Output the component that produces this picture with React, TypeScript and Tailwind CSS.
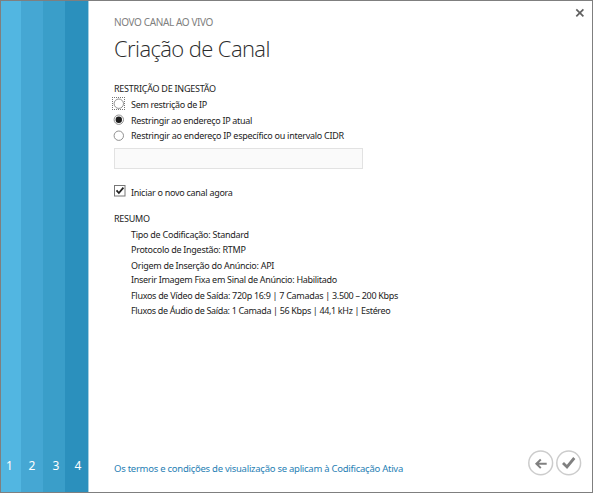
import React from "react";

const steps = [
  { n: 1, cls: "w-5 bg-[#52b6e1] pr-[3px]" },
  { n: 2, cls: "w-[22px] bg-[#45a7d3]" },
  { n: 3, cls: "w-[22px] bg-[#3a9ec9] pl-[4px]" },
  { n: 4, cls: "w-[23px] bg-[#2b90bd] pl-[3px]" },
];

const summary = [
  { text: "Tipo de Codificação: Standard", cls: "h-[15px] tracking-[-0.26px]" },
  { text: "Protocolo de Ingestão: RTMP", cls: "h-[16px] tracking-[-0.28px]" },
  { text: "Origem de Inserção do Anúncio: API", cls: "h-[14px] tracking-[-0.29px]" },
  { text: "Inserir Imagem Fixa em Sinal de Anúncio: Habilitado", cls: "h-[16px] tracking-[-0.3px]" },
  { text: "Fluxos de Vídeo de Saída: 720p 16:9 | 7 Camadas | 3.500 – 200 Kbps", cls: "h-[15px] tracking-[-0.3px]" },
  { text: "Fluxos de Áudio de Saída: 1 Camada | 56 Kbps | 44,1 kHz | Estéreo", cls: "h-[15px] tracking-[-0.35px]" },
];

function Radio({ checked, focused }: { checked?: boolean; focused?: boolean }) {
  return (
    <svg width="14" height="14" viewBox="0 0 14 14" className="block shrink-0">
      {focused && (
        <rect x="0.5" y="0.5" width="12" height="12" fill="none" stroke="#777" strokeDasharray="1 1" strokeDashoffset="0.5" shapeRendering="crispEdges" />
      )}
      <circle cx="6.8" cy="6.7" r="4.7" fill="#fff" stroke="#858585" strokeWidth="0.9" />
      {checked && <circle cx="6.8" cy="6.7" r="3.2" fill="#1c1c1c" />}
    </svg>
  );
}

function Option({ label, cls, checked, focused }: { label: string; cls: string; checked?: boolean; focused?: boolean }) {
  return (
    <label className="-ml-[2px] flex">
      <Radio checked={checked} focused={focused} />
      <span className={"ml-[5px] pt-[1px] leading-[14px] " + cls}>{label}</span>
    </label>
  );
}

export default function App() {
  return (
    <div className="flex h-[493px] w-[593px] overflow-hidden whitespace-nowrap border border-[#7f7f7f] bg-white font-['Noto_Sans','Open_Sans',sans-serif] text-[9px] text-[#1c1c1c]">
      <aside className="flex w-[88px] border-r border-[#a5cfe1]">
        {steps.map((s) => (
          <div key={s.n} className={"flex shrink-0 items-end justify-center pb-[17px] text-[12px] leading-[18px] text-white " + s.cls}>
            {s.n}
          </div>
        ))}
      </aside>
      <main className="flex flex-1 flex-col pl-[25px]">
        <div className="flex h-[33px] justify-between">
          <div className="pt-[14px] text-[10px] leading-[14px] tracking-[-0.38px] text-[#808080]">NOVO CANAL AO VIVO</div>
          <svg width="10" height="10" viewBox="0 0 10 10" className="mt-[7px] mr-[7px]">
            <path d="M1.3 1.3 8.4 8.4M8.4 1.3 1.3 8.4" stroke="#606060" strokeWidth="1.7" />
          </svg>
        </div>
        <h1 className="h-[48px] font-['Open_Sans',sans-serif] text-[22px] font-light leading-[28px] tracking-[-0.6px] text-[#2b2b2b]">Criação de Canal</h1>
        <h2 className="h-[15px] leading-[14px] tracking-[-0.25px]">RESTRIÇÃO DE INGESTÃO</h2>
        <div className="h-4"><Option label="Sem restrição de IP" cls="tracking-[-0.3px]" focused /></div>
        <div className="h-4"><Option label="Restringir ao endereço IP atual" cls="tracking-[-0.31px]" checked /></div>
        <div className="h-4"><Option label="Restringir ao endereço IP específico ou intervalo CIDR" cls="-mt-px tracking-[-0.27px]" /></div>
        <input aria-label="CIDR" className="mt-[3px] block h-[21px] w-[249px] shrink-0 border border-[#e2e2e2] bg-[#fafafa]" />
        <label className="mt-4 flex h-[27px]">
          <svg width="12" height="12" viewBox="0 0 12 12" className="shrink-0">
            <rect x="0.5" y="0.5" width="10.5" height="10.5" fill="#fff" stroke="#777" />
            <path d="M2.5 5.4 4.9 8 9.4 2.7" fill="none" stroke="#222" strokeWidth="1.8" />
          </svg>
          <span className="ml-[5px] pt-px leading-[14px] tracking-[-0.28px]">Iniciar o novo canal agora</span>
        </label>
        <h2 className="h-4 leading-[14px] tracking-[-0.25px]">RESUMO</h2>
        <div className="pl-[17px]">
          {summary.map((r) => (
            <div key={r.text} className={"leading-[14px] " + r.cls}>{r.text}</div>
          ))}
        </div>
        <footer className="mt-auto flex h-[42px] justify-between">
          <a className="pt-[12px] text-[9.5px] leading-[14px] tracking-[-0.26px] text-[#1f80b4]">
            Os termos e condições de visualização se aplicam à Codificação Ativa
          </a>
          <div className="mr-[10px] flex gap-[2px]">
            <svg width="26" height="26" viewBox="0 0 26 26">
              <circle cx="12.7" cy="12.9" r="11.9" fill="none" stroke="#ccc" strokeWidth="1.5" />
              <path d="M18.7 13.8H8.5M12.8 9.5 8.4 13.8 12.8 18.1" fill="none" stroke="#808080" strokeWidth="2" />
            </svg>
            <svg width="26" height="26" viewBox="0 0 26 26">
              <circle cx="12.7" cy="12.9" r="11.9" fill="none" stroke="#ccc" strokeWidth="1.5" />
              <path d="M7 12.9 11 16.9 18.3 8" fill="none" stroke="#808080" strokeWidth="2.8" />
            </svg>
          </div>
        </footer>
      </main>
    </div>
  );
}
